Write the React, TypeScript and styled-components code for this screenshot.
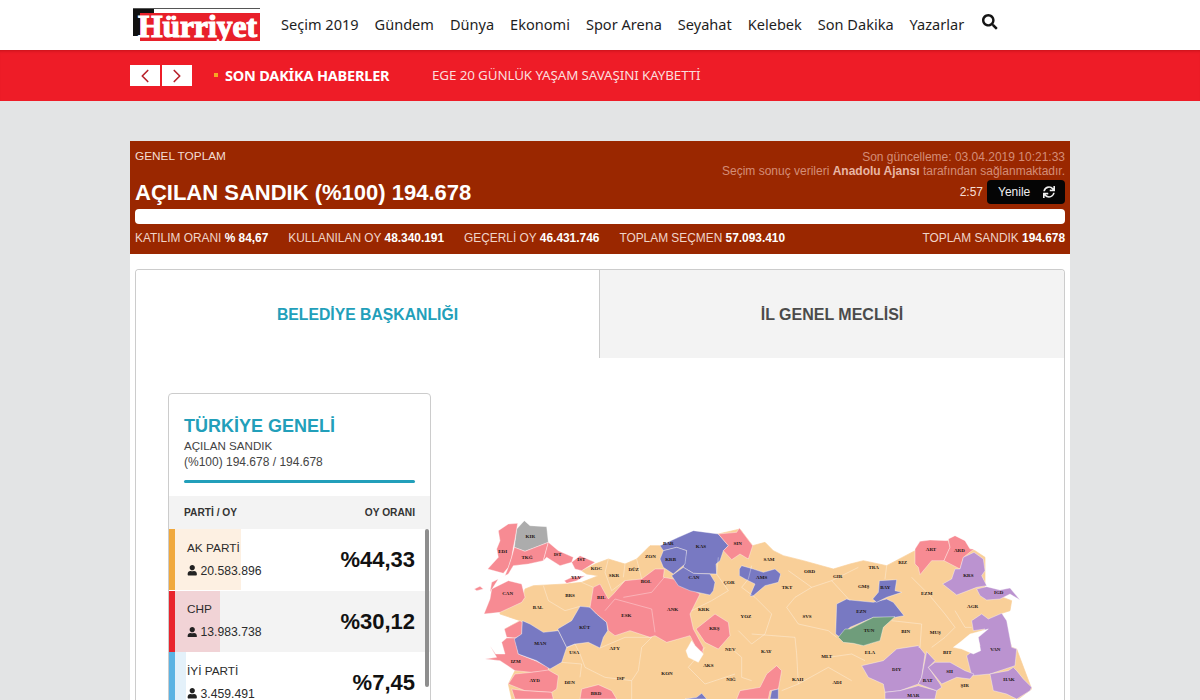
import styled, { createGlobalStyle } from "styled-components";
import { FaSearch, FaSync, FaUser } from "react-icons/fa";
import { ChevronLeft, ChevronRight } from "lucide-react";

const Global = createGlobalStyle`
  html, body { margin: 0; padding: 0; height: 700px; overflow: hidden; }
  body { background: #e3e4e5; font-family: "Liberation Sans", Arial, sans-serif; }
`;

const Header = styled.header`
  height: 50px;
  background: #fff;
`;
const HeaderInner = styled.div`
  width: 940px;
  margin: 0 auto;
  height: 100%;
  display: flex;
  align-items: center;
  position: relative;
`;
const Logo = styled.svg`
  width: 132px;
  height: 38px;
  margin: 0 17px 0 2px;
  flex: none;
`;
const Nav = styled.nav`
  display: flex;
  gap: 16px;
  align-items: center;
  font-family: "Noto Sans", sans-serif;
  font-size: 14.55px;
  color: #1e1e1e;
  padding-bottom: 3px;
`;
const SearchIcon = styled(FaSearch)`
  font-size: 15.5px;
  margin: -3px 0 0 2px;
  color: #151515;
`;
const Ticker = styled.div`
  height: 51px;
  background: #ee1c27;
  box-shadow: inset 0 3px 3px -2px rgba(120, 0, 0, 0.35);
`;
const TickerInner = styled.div`
  width: 940px;
  margin: 0 auto;
  height: 100%;
  display: flex;
  align-items: center;
`;
const Arrows = styled.div`
  display: flex;
  gap: 2px;
  margin-right: 22px;
`;
const Arrow = styled.button`
  width: 30px;
  height: 21px;
  border: 0;
  padding: 0;
  background: #fff;
  color: #b8202a;
  display: flex;
  align-items: center;
  justify-content: center;
`;
const Breaking = styled.div`
  font-family: "Noto Sans", sans-serif;
  font-weight: 700;
  font-size: 14.5px;
  color: #fff;
  display: flex;
  align-items: center;
  width: 218px;
  letter-spacing: -0.2px;
  padding-bottom: 2px;
  &::before {
    content: "";
    width: 4px;
    height: 4px;
    background: #f6a623;
    margin-right: 7px;
  }
`;
const Headline = styled.div`
  font-family: "Noto Sans", sans-serif;
  font-size: 13.4px;
  color: #fbdcdc;
  letter-spacing: -0.12px;
  padding-bottom: 2px;
`;

const Page = styled.main`
  width: 940px;
  margin: 40px auto 0;
  background: #fff;
`;
const Summary = styled.section`
  height: 113px;
  box-sizing: border-box;
  background: #9a2700;
  padding: 9px 5px 0;
  color: #fff;
`;
const SummaryTop = styled.div`
  display: flex;
  justify-content: space-between;
  height: 59px;
`;
const TotalLabel = styled.div`
  font-size: 11.8px;
  line-height: 13px;
  color: #f3ddd3;
`;
const BigTitle = styled.div`
  font-size: 22px;
  font-weight: 700;
  line-height: 26px;
  margin-top: 17px;
`;
const Meta = styled.div`
  text-align: right;
  font-size: 12px;
  line-height: 14px;
  color: #d48d77;
  b { color: #e8b5a4; }
`;
const RefreshRow = styled.div`
  display: flex;
  justify-content: flex-end;
  align-items: center;
  gap: 4px;
  margin-top: 2px;
  color: #f7ddd2;
`;
const RefreshButton = styled.button`
  width: 78px;
  height: 24px;
  box-sizing: border-box;
  padding: 0 10px 0 11px;
  border: 0;
  border-radius: 4px;
  background: #050505;
  color: #eee;
  font: 12px "Liberation Sans", sans-serif;
  display: flex;
  align-items: center;
  justify-content: space-between;
  svg { font-size: 12px; }
`;
const Progress = styled.div`
  height: 15px;
  background: #fff;
  border-radius: 4px;
`;
const Stats = styled.div`
  display: flex;
  gap: 20px;
  font-size: 11.9px;
  line-height: 28px;
  color: #f0d5ca;
  b { color: #fff; }
  span:last-child { margin-left: auto; }
`;

const TabCard = styled.section`
  margin: 15px 5px 0;
  border: 1px solid #ccc;
  border-bottom: 0;
  border-radius: 4px 4px 0 0;
  overflow: hidden;
  height: 440px;
`;
const Tabs = styled.div`
  display: grid;
  grid-template-columns: 463px 1fr;
  height: 88px;
`;
const Tab = styled.div<{ $active?: boolean }>`
  display: flex;
  align-items: center;
  justify-content: center;
  padding-top: 2px;
  font-size: ${(p) => (p.$active ? "15.75px" : "16px")};
  font-weight: 700;
  color: ${(p) => (p.$active ? "#229fba" : "#4b4b4b")};
  background: ${(p) => (p.$active ? "#fff" : "#f3f3f3")};
  border-left: ${(p) => (p.$active ? "0" : "1px solid #ccc")};
`;
const Body = styled.div`
  display: flex;
  padding: 35px 0 0 32px;
`;
const Sidebar = styled.aside`
  position: relative;
  width: 263px;
  height: 360px;
  box-sizing: border-box;
  border: 1px solid #ccc;
  border-radius: 4px 4px 0 0;
  flex: none;
  overflow: hidden;
`;
const SideHead = styled.div`
  padding: 22px 15px 13px;
`;
const SideTitle = styled.div`
  font-size: 18px;
  font-weight: 700;
  line-height: 21px;
  color: #229fba;
  margin-bottom: 1px;
`;
const SideSub = styled.div<{ $size: number }>`
  font-size: ${(p) => p.$size}px;
  line-height: 16px;
  color: #444;
`;
const Rule = styled.div`
  height: 3px;
  background: #229fba;
  border-radius: 2px;
  margin-top: 10px;
`;
const ColHead = styled.div`
  height: 33px;
  padding: 0 15px;
  background: #f3f3f3;
  display: flex;
  align-items: center;
  justify-content: space-between;
  font-size: 10.2px;
  font-weight: 700;
  color: #333;
`;
const Row = styled.div<{ $color: string; $grey?: boolean }>`
  position: relative;
  height: 61px;
  margin-bottom: 0.5px;
  box-sizing: border-box;
  background: ${(p) => (p.$grey ? "#f3f3f3" : "#fff")};
  border-left: 6px solid ${(p) => p.$color};
  display: flex;
  align-items: center;
  justify-content: space-between;
  padding: 0 15px 0 12px;
`;
const Fill = styled.div<{ $tint: string }>`
  position: absolute;
  left: 0;
  top: 0;
  bottom: 0;
  background: ${(p) => p.$tint};
`;
const PartyInfo = styled.div`
  position: relative;
  font-size: 11.8px;
  color: #2b2b2b;
  padding-bottom: 1px;
`;
const Votes = styled.div`
  display: flex;
  align-items: center;
  gap: 3px;
  margin-top: 9px;
  font-size: 12.2px;
  svg { font-size: 10.5px; color: #222; }
`;
const Share = styled.div`
  position: relative;
  font-size: 22px;
  font-weight: 700;
  color: #111;
  padding-top: 1px;
`;
const ScrollThumb = styled.div`
  position: absolute;
  right: 1px;
  top: 135px;
  width: 4px;
  height: 158px;
  border-radius: 2px;
  background: #8e8e8e;
`;
const MapWrap = styled.div`
  margin: 121px 0 0 34px;
  flex: none;
`;
const TurkeyMap = styled.svg`
  display: block;
  width: 580px;
  height: 185px;
  text {
    font-family: "Liberation Serif", serif;
    font-weight: 700;
    font-size: 15px;
    fill: #1d1510;
    text-anchor: middle;
    dominant-baseline: middle;
  }
`;

const navItems = ["Seçim 2019", "Gündem", "Dünya", "Ekonomi", "Spor Arena", "Seyahat", "Kelebek", "Son Dakika", "Yazarlar"];

const parties = [
  { name: "AK PARTİ", votes: "20.583.896", share: "%44,33", pct: 44.33, color: "#f0a83c", tint: "#fdf0e2" },
  { name: "CHP", votes: "13.983.738", share: "%30,12", pct: 30.12, color: "#e9242c", tint: "#f1d3d6", grey: true },
  { name: "İYİ PARTİ", votes: "3.459.491", share: "%7,45", pct: 7.45, color: "#5bb3e3", tint: "#e4f1fa" },
];

const PINK = "#f78b93";
const BLUE = "#7879c2";
const PURPLE = "#bb93d0";
const GREEN = "#6f9d7b";

// x offset of the crop each province was traced from
const MID = 585;
const EAST = 1155;

const shift = (pts: number[], dx: number) =>
  pts.map((v, i) => (i % 2 === 0 ? v + dx : v)).join(" ");

const outline = [
  105,290, 170,265, 180,225, 205,215, 300,210, 350,205, 400,185, 365,180, 350,170, 390,150, 430,135, 480,150, 515,135, 555,95, 590,95,
  760,60, 825,45, 863,95, 900,85, 925,110, 955,125, 1015,140, 1105,165, 1155,150, 1195,140, 1265,155, 1350,110, 1450,80, 1530,110, 1560,130,
  1560,230, 1640,260, 1635,290, 1610,298, 1640,400, 1655,405, 1700,525, 1660,555,
  140,555, 130,510, 150,470, 250,470, 250,420, 150,380, 120,345, 165,320, 105,300,
];

const provinces: { fill: string; pts: number[]; dx?: number }[] = [
  { fill: "#acacac", pts: [148,100, 155,45, 178,20, 195,35, 245,38, 250,85, 180,112] },
  { fill: PINK, pts: [100,50, 130,30, 158,28, 150,75, 145,100, 140,130, 130,160, 115,178, 68,165, 100,130, 95,105, 105,80] },
  { fill: PINK, pts: [148,100, 180,112, 250,85, 235,140, 190,150, 145,155, 130,180, 100,195, 75,235, 80,205, 120,185, 130,160, 140,130] },
  { fill: PINK, pts: [250,85, 280,110, 325,130, 320,145, 285,155, 245,130, 235,140] },
  { fill: PINK, pts: [320,145, 345,125, 390,145, 350,170, 330,165] },
  { fill: PINK, pts: [298,200, 320,190, 360,185, 335,200, 305,208] },
  { fill: PINK, pts: [28,225, 45,217, 55,225, 35,230] },
  { fill: PINK, pts: [57,300, 75,255, 80,225, 130,200, 170,210, 180,250, 170,265, 105,295] },
  { fill: PINK, pts: [118,345, 165,320, 172,325, 170,362, 150,372, 125,370] },
  { fill: PINK, pts: [110,385, 125,372, 150,372, 160,420, 215,442, 250,460, 250,470, 200,475, 150,470, 105,440, 60,435, 95,430, 75,395, 92,420, 120,420] },
  { fill: PINK, pts: [130,510, 150,480, 200,475, 250,468, 280,485, 275,525, 260,535, 180,530] },
  { fill: PINK, pts: [140,525, 180,530, 260,535, 265,555, 150,555] },
  { fill: PINK, pts: [345,555, 350,525, 400,512, 440,530, 455,555] },
  { fill: BLUE, pts: [148,375, 170,360, 172,320, 195,330, 235,355, 280,350, 305,400, 290,445, 255,465, 215,440, 160,420] },
  { fill: BLUE, pts: [278,345, 320,320, 345,277, 375,280, 395,300, 425,325, 428,350, 415,370, 405,402, 370,385, 330,390, 305,400] },
  { fill: PINK, pts: [395,300, 375,280, 385,220, 405,210, 430,255, 445,240, 480,200, 530,195, 570,165, 598,165, 595,190, 625,195, 705,240, 675,300, 685,345, 715,400, 713,418, 690,395, 675,365, 605,385, 570,365, 555,370, 495,350, 450,365, 430,350, 425,325] },
  { fill: BLUE, dx: MID, pts: [0,95, 55,70, 100,50, 175,60, 205,95, 190,110, 180,140, 168,150, 170,180, 100,178, 70,160, 80,110, 50,100, 10,110] },
  { fill: BLUE, dx: MID, pts: [0,135, 10,110, 50,100, 80,110, 75,150, 40,180, 10,160] },
  { fill: BLUE, dx: MID, pts: [35,185, 70,160, 100,178, 150,180, 165,205, 160,230, 150,243, 90,230, 55,215] },
  { fill: PINK, dx: MID, pts: [175,60, 230,55, 238,42, 278,95, 265,135, 240,120, 215,137, 190,110, 205,95] },
  { fill: BLUE, dx: MID, pts: [238,165, 245,155, 280,165, 310,175, 345,165, 362,180, 355,205, 315,215, 278,247, 270,245, 285,210, 255,195, 238,185] },
  { fill: PINK, dx: MID, pts: [108,345, 165,300, 205,325, 210,365, 175,405, 135,385] },
  { fill: "#fff", dx: MID, pts: [78,410, 95,380, 105,395, 130,420, 115,445, 85,430] },
  { fill: PINK, dx: MID, pts: [230,555, 240,530, 300,520, 320,480, 350,455, 365,470, 355,525, 330,530, 325,555] },
  { fill: BLUE, dx: MID, pts: [330,555, 335,530, 355,525, 355,555] },
  { fill: BLUE, dx: MID, pts: [75,555, 110,550, 125,538, 140,555] },
  { fill: BLUE, dx: EAST, pts: [0,258, 70,265, 110,255, 130,265, 162,305, 135,310, 70,310, 0,340, -30,370, -43,360, -40,270, -10,255] },
  { fill: BLUE, dx: EAST, pts: [88,200, 140,197, 135,230, 155,235, 110,250, 80,265, 68,255, 85,235] },
  { fill: GREEN, dx: EAST, pts: [-35,370, -15,345, 0,345, 70,310, 135,308, 100,340, 90,380, 40,395, 10,388, -20,385] },
  { fill: PINK, dx: EAST, pts: [195,105, 210,82, 240,78, 295,80, 300,100, 282,140, 245,140, 210,182, 205,160, 195,150] },
  { fill: PINK, dx: EAST, pts: [295,75, 315,65, 345,80, 360,105, 372,105, 340,130, 330,165, 282,140, 300,100] },
  { fill: PURPLE, dx: EAST, pts: [372,115, 400,135, 405,170, 395,185, 410,215, 380,220, 320,243, 278,210, 305,195, 315,165, 330,165, 340,130] },
  { fill: PURPLE, dx: EAST, pts: [380,225, 410,218, 450,228, 480,222, 510,258, 480,240, 450,255, 410,258, 390,245] },
  { fill: PURPLE, dx: EAST, pts: [365,320, 395,300, 415,315, 455,298, 470,320, 485,400, 500,405, 495,455, 420,480, 365,485, 350,425, 390,395, 380,365, 405,345, 370,350] },
  { fill: "#fff", dx: EAST, pts: [310,400, 330,385, 360,360, 415,345, 385,370, 392,410, 370,420, 335,405] },
  { fill: PURPLE, dx: EAST, pts: [420,480, 475,470, 490,460, 500,470, 520,495, 545,520, 540,530, 500,555, 470,540, 430,530] },
  { fill: PURPLE, dx: EAST, pts: [35,455, 100,440, 140,405, 205,395, 225,420, 215,490, 205,510, 150,530, 105,535, 100,510, 55,490] },
  { fill: PURPLE, dx: EAST, pts: [105,535, 150,530, 205,515, 260,530, 255,555, 105,555] },
  { fill: PURPLE, dx: EAST, pts: [205,510, 215,490, 230,413, 255,440, 235,460, 270,510, 275,520, 260,530] },
  { fill: PURPLE, dx: EAST, pts: [235,460, 255,445, 300,445, 345,470, 372,480, 360,495, 320,490, 275,510] },
];

const borders: number[][] = [
  [235,215, 250,260, 300,290, 345,277],
  [350,205, 385,220],
  [430,135, 420,175, 440,230, 480,200],
  [480,150, 475,190],
  [515,135, 530,195],
  [420,290, 450,255, 560,285, 570,355],
  [475,250, 560,235, 598,190],
  [305,400, 330,390, 345,420, 360,460, 420,490, 500,500, 500,555],
  [405,402, 480,370, 560,370, 530,400, 520,470, 500,500],
  [290,445, 350,450, 345,490],
  [760,130, 755,180, 790,230, 740,260, 680,290],
  [860,155, 850,195, 830,220, 870,250, 920,300, 900,360, 860,390, 820,350],
  [970,170, 1040,220, 990,250, 965,280, 1000,330, 1090,350, 1115,370],
  [1040,220, 1100,200, 1180,160],
  [1100,200, 1155,260],
  [860,360, 990,370, 995,420, 1000,510, 950,530],
  [795,400, 830,430, 830,490, 860,500],
  [720,400, 670,460, 720,510, 810,480],
  [1090,430, 1160,420, 1200,440],
  [1000,510, 1090,460, 1160,500],
  [1265,155, 1260,195],
  [1340,190, 1390,240, 1440,300, 1470,340, 1440,370, 1400,400],
  [1280,320, 1370,330, 1365,400, 1360,400],
  [1470,290, 1500,340, 1520,340],
];

const labels: [string, number, number][] = [
  ["KIR",196,70], ["EDI",113,115], ["TKĞ",186,133], ["IST",278,124], ["IST",349,139], ["KOC",394,166], ["SKR",447,187], ["DÜZ",506,169], ["ZON",556,130], ["YLV",333,193], ["BOL",543,205], ["CAN",128,241], ["BRS",315,247], ["BIL",409,253], ["BAL",219,283], ["ESK",484,307], ["KÜT",359,343], ["MAN",226,391], ["USA",328,418], ["AFY",449,406], ["IZM",152,445], ["AYD",209,502], ["DEN",314,508], ["ISP",467,496], ["BRD",393,541],
  ["BAR",25+MID,91], ["KAS",123+MID,100], ["SIN",233+MID,91], ["KRB",32+MID,139], ["CAN",102+MID,193], ["SAM",327+MID,139], ["ORD",449+MID,175], ["GIR",533+MID,190], ["AMS",305+MID,193], ["ÇOR",207+MID,208], ["TKT",381+MID,223], ["ANK",38+MID,289], ["KRK",131+MID,289], ["YOZ",258+MID,310], ["SVS",441+MID,310], ["KRŞ",163+MID,346], ["NEV",211+MID,409], ["KAY",319+MID,415], ["MLT",500+MID,430], ["KON",21+MID,481], ["AKS",145+MID,457], ["NIĞ",213+MID,499], ["KAH",413+MID,499], ["ADI",531+MID,508],
  ["ART",243+EAST,109], ["ARD",328+EAST,112], ["RIZ",158+EAST,148], ["TRA",71+EAST,163], ["GMŞ",41+EAST,220], ["BAY",106+EAST,223], ["KRS",355+EAST,187], ["EZM",230+EAST,241], ["IGD",446+EAST,238], ["AGR",368+EAST,280], ["EZN",34+EAST,295], ["TUN",57+EAST,352], ["BIN",167+EAST,355], ["MUŞ",256+EAST,358], ["ELA",60+EAST,418], ["VAN",436+EAST,409], ["BIT",292+EAST,418], ["DIY",140+EAST,469], ["SII",299+EAST,475], ["BAT",233+EAST,502], ["HAK",477+EAST,499], ["ŞIR",344+EAST,517], ["MAR",190+EAST,547],
];

export default function App() {
  return (
    <>
      <Global />
      <Header>
        <HeaderInner>
          <Logo viewBox="0 0 132 38">
            <rect x="1" y="2" width="127" height="1" fill="#555" />
            <rect x="1" y="3" width="21" height="27" fill="#111" />
            <rect x="8" y="7" width="120" height="28" fill="#e8202a" />
            <text x="6" y="31" fontFamily="'Liberation Serif', serif" fontWeight="700" fontSize="31" fill="#fff" stroke="#fff" strokeWidth="1.2" textLength="119" lengthAdjust="spacingAndGlyphs">Hürriyet</text>
          </Logo>
          <Nav>
            {navItems.map((item) => <span key={item}>{item}</span>)}
            <SearchIcon />
          </Nav>
        </HeaderInner>
      </Header>
      <Ticker>
        <TickerInner>
          <Arrows>
            <Arrow><ChevronLeft size={22} strokeWidth={1.8} /></Arrow>
            <Arrow><ChevronRight size={22} strokeWidth={1.8} /></Arrow>
          </Arrows>
          <Breaking>SON DAKİKA HABERLER</Breaking>
          <Headline>EGE 20 GÜNLÜK YAŞAM SAVAŞINI KAYBETTİ</Headline>
        </TickerInner>
      </Ticker>
      <Page>
        <Summary>
          <SummaryTop>
            <div>
              <TotalLabel>GENEL TOPLAM</TotalLabel>
              <BigTitle>AÇILAN SANDIK (%100) 194.678</BigTitle>
            </div>
            <Meta>
              <div>Son güncelleme: 03.04.2019 10:21:33</div>
              <div>Seçim sonuç verileri <b>Anadolu Ajansı</b> tarafından sağlanmaktadır.</div>
              <RefreshRow>
                2:57
                <RefreshButton>Yenile <FaSync /></RefreshButton>
              </RefreshRow>
            </Meta>
          </SummaryTop>
          <Progress />
          <Stats>
            <span>KATILIM ORANI <b>% 84,67</b></span>
            <span>KULLANILAN OY <b>48.340.191</b></span>
            <span>GEÇERLİ OY <b>46.431.746</b></span>
            <span>TOPLAM SEÇMEN <b>57.093.410</b></span>
            <span>TOPLAM SANDIK <b>194.678</b></span>
          </Stats>
        </Summary>
        <TabCard>
          <Tabs>
            <Tab $active>BELEDİYE BAŞKANLIĞI</Tab>
            <Tab>İL GENEL MECLİSİ</Tab>
          </Tabs>
          <Body>
            <Sidebar>
              <SideHead>
                <SideTitle>TÜRKİYE GENELİ</SideTitle>
                <SideSub $size={11.6}>AÇILAN SANDIK</SideSub>
                <SideSub $size={12}>(%100) 194.678 / 194.678</SideSub>
                <Rule />
              </SideHead>
              <ColHead><span>PARTİ / OY</span><span>OY ORANI</span></ColHead>
              {parties.map((p) => (
                <Row key={p.name} $color={p.color} $grey={p.grey}>
                  <Fill $tint={p.tint} style={{ width: p.pct * 1.5 }} />
                  <PartyInfo>
                    {p.name}
                    <Votes><FaUser />{p.votes}</Votes>
                  </PartyInfo>
                  <Share>{p.share}</Share>
                </Row>
              ))}
              <ScrollThumb />
            </Sidebar>
            <MapWrap>
              <TurkeyMap viewBox="0 0 1740 555">
                <polygon points={outline.join(" ")} fill="#f9cf98" stroke="#f9cf98" strokeWidth="2" strokeLinejoin="round" />
                {provinces.map((p, i) => (
                  <polygon key={i} points={shift(p.pts, p.dx ?? 0)} fill={p.fill} stroke="#fff" strokeOpacity="0.45" strokeWidth="2.5" strokeLinejoin="round" />
                ))}
                {borders.map((b, i) => (
                  <polyline key={i} points={b.join(" ")} fill="none" stroke="#fff" strokeOpacity="0.4" strokeWidth="2.5" strokeLinejoin="round" />
                ))}
                {labels.map(([t, x, y]) => <text key={`${t}${x}`} x={x} y={y}>{t}</text>)}
              </TurkeyMap>
            </MapWrap>
          </Body>
        </TabCard>
      </Page>
    </>
  );
}
